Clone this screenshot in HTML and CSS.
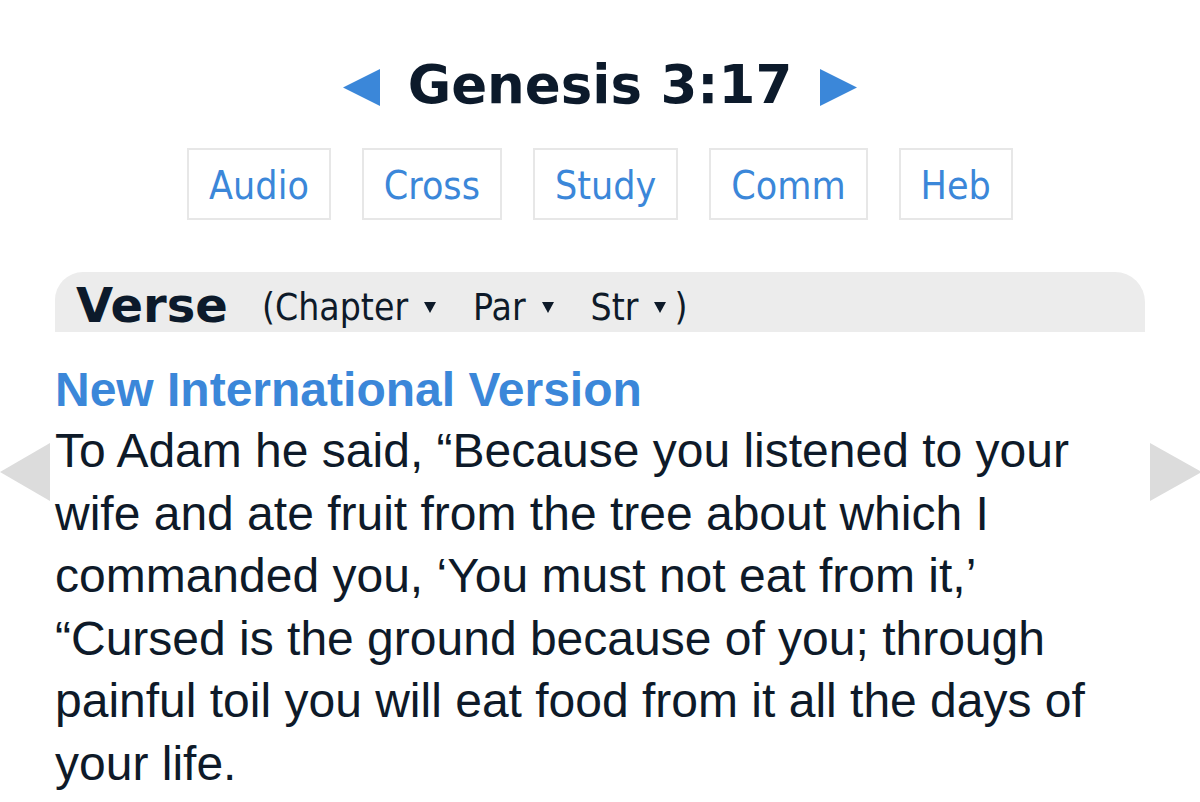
FILE: index.html
```html
<!DOCTYPE html>
<html lang="en">
<head>
<meta charset="utf-8">
<title>Genesis 3:17</title>
<link rel="stylesheet" href="styles.css">
</head>
<body>
<div class="page">
  <header class="ref-head">
    <a class="nav-arrow" href="#prev" aria-label="Previous verse">
      <svg width="37" height="37" viewBox="0 0 37 37"><polygon points="0,18.5 37,0 37,37" /></svg>
    </a>
    <h1 class="ref-title">Genesis 3:17</h1>
    <a class="nav-arrow" href="#next" aria-label="Next verse">
      <svg width="37" height="37" viewBox="0 0 37 37"><polygon points="37,18.5 0,0 0,37" /></svg>
    </a>
  </header>

  <nav class="tools">
    <a class="tool" href="#audio">Audio</a>
    <a class="tool" href="#cross">Cross</a>
    <a class="tool" href="#study">Study</a>
    <a class="tool" href="#comm">Comm</a>
    <a class="tool" href="#heb">Heb</a>
  </nav>

  <div class="view-bar">
    <span class="view-name">Verse</span>
    <span class="view-opts">(<span class="opt">Chapter<svg class="caret" width="12" height="12" viewBox="0 0 12 12"><polygon points="0,1 12,1 6,12" /></svg></span><span class="opt">Par<svg class="caret" width="12" height="12" viewBox="0 0 12 12"><polygon points="0,1 12,1 6,12" /></svg></span><span class="opt last">Str<svg class="caret" width="12" height="12" viewBox="0 0 12 12"><polygon points="0,1 12,1 6,12" /></svg></span>)</span>
  </div>

  <section class="version">
    <h2 class="version-name">New International Version</h2>
    <p class="verse-text">To Adam he said, “Because you listened to your wife and ate fruit from the tree about which I commanded you, ‘You must not eat from it,’ “Cursed is the ground because of you; through painful toil you will eat food from it all the days of your life.</p>
  </section>
</div>

<a class="side-arrow side-left" href="#prev-verse" aria-label="Previous">
  <svg width="52" height="58" viewBox="0 0 52 58"><polygon points="0,29 50,0 50,58" /></svg>
</a>
<a class="side-arrow side-right" href="#next-verse" aria-label="Next">
  <svg width="52" height="58" viewBox="0 0 52 58"><polygon points="52,29 0,0 0,58" /></svg>
</a>
</body>
</html>
```

FILE: styles.css
```css
html, body {
  margin: 0;
  padding: 0;
  background: #ffffff;
}

body {
  position: relative;
  width: 1200px;
  height: 802px;
  overflow: hidden;
  color: #0e1a29;
  font-family: "DejaVu Sans", Verdana, sans-serif;
}

a {
  text-decoration: none;
  color: inherit;
}

.page {
  width: 1090px;
  margin: 0 auto;
  padding-top: 53px;
}

/* title row with previous / next arrows */
.ref-head {
  display: flex;
  justify-content: center;
  align-items: center;
  gap: 28px;
}

.nav-arrow {
  display: flex;
  fill: #3b87d9;
  margin-top: 4px;
}

.ref-title {
  margin: 0;
  font-family: "DejaVu Sans", Verdana, sans-serif;
  font-weight: bold;
  font-size: 53px;
  line-height: 64px;
  color: #0c1a2b;
}

/* row of resource buttons */
.tools {
  display: flex;
  justify-content: center;
  gap: 31px;
  margin-top: 31px;
}

.tool {
  display: block;
  border: 2px solid #e7e7e7;
  padding: 4px 20px 0;
  line-height: 64px;
  font-family: "DejaVu Sans Condensed", "DejaVu Sans", sans-serif;
  font-size: 39px;
  color: #3b87d9;
}

/* grey tab bar */
.view-bar {
  margin-top: 52px;
  height: 60px;
  box-sizing: border-box;
  padding: 6px 0 0 21px;
  line-height: 54px;
  background: #ececec;
  border-radius: 28px 30px 0 0;
  white-space: nowrap;
}

.view-name {
  font-family: "DejaVu Sans", Verdana, sans-serif;
  font-weight: bold;
  font-size: 48px;
  color: #0c1a2b;
}

.view-opts {
  margin-left: 29px;
  vertical-align: 2px;
  font-family: "DejaVu Sans Condensed", "DejaVu Sans", sans-serif;
  font-size: 37px;
  color: #0e1a29;
}

.opt {
  margin-right: 37px;
}

.opt.last {
  margin-right: 8px;
}

.caret {
  margin-left: 16px;
  vertical-align: 7px;
  fill: #0e1a29;
}

/* verse text */
.version {
  font-family: "Liberation Sans", Arial, sans-serif;
  font-size: 48px;
}

.version-name {
  margin: 28px 0 0;
  font-size: 48px;
  font-weight: bold;
  line-height: 60px;
  color: #3b87d9;
}

.verse-text {
  margin: 0;
  line-height: 62.6px;
  color: #0e1a29;
}

/* large side paging arrows */
.side-arrow {
  position: absolute;
  top: 443px;
  fill: #dcdcdc;
  display: block;
}

.side-arrow svg {
  display: block;
}

.side-left {
  left: 0;
}

.side-right {
  left: 1150px;
}
```
